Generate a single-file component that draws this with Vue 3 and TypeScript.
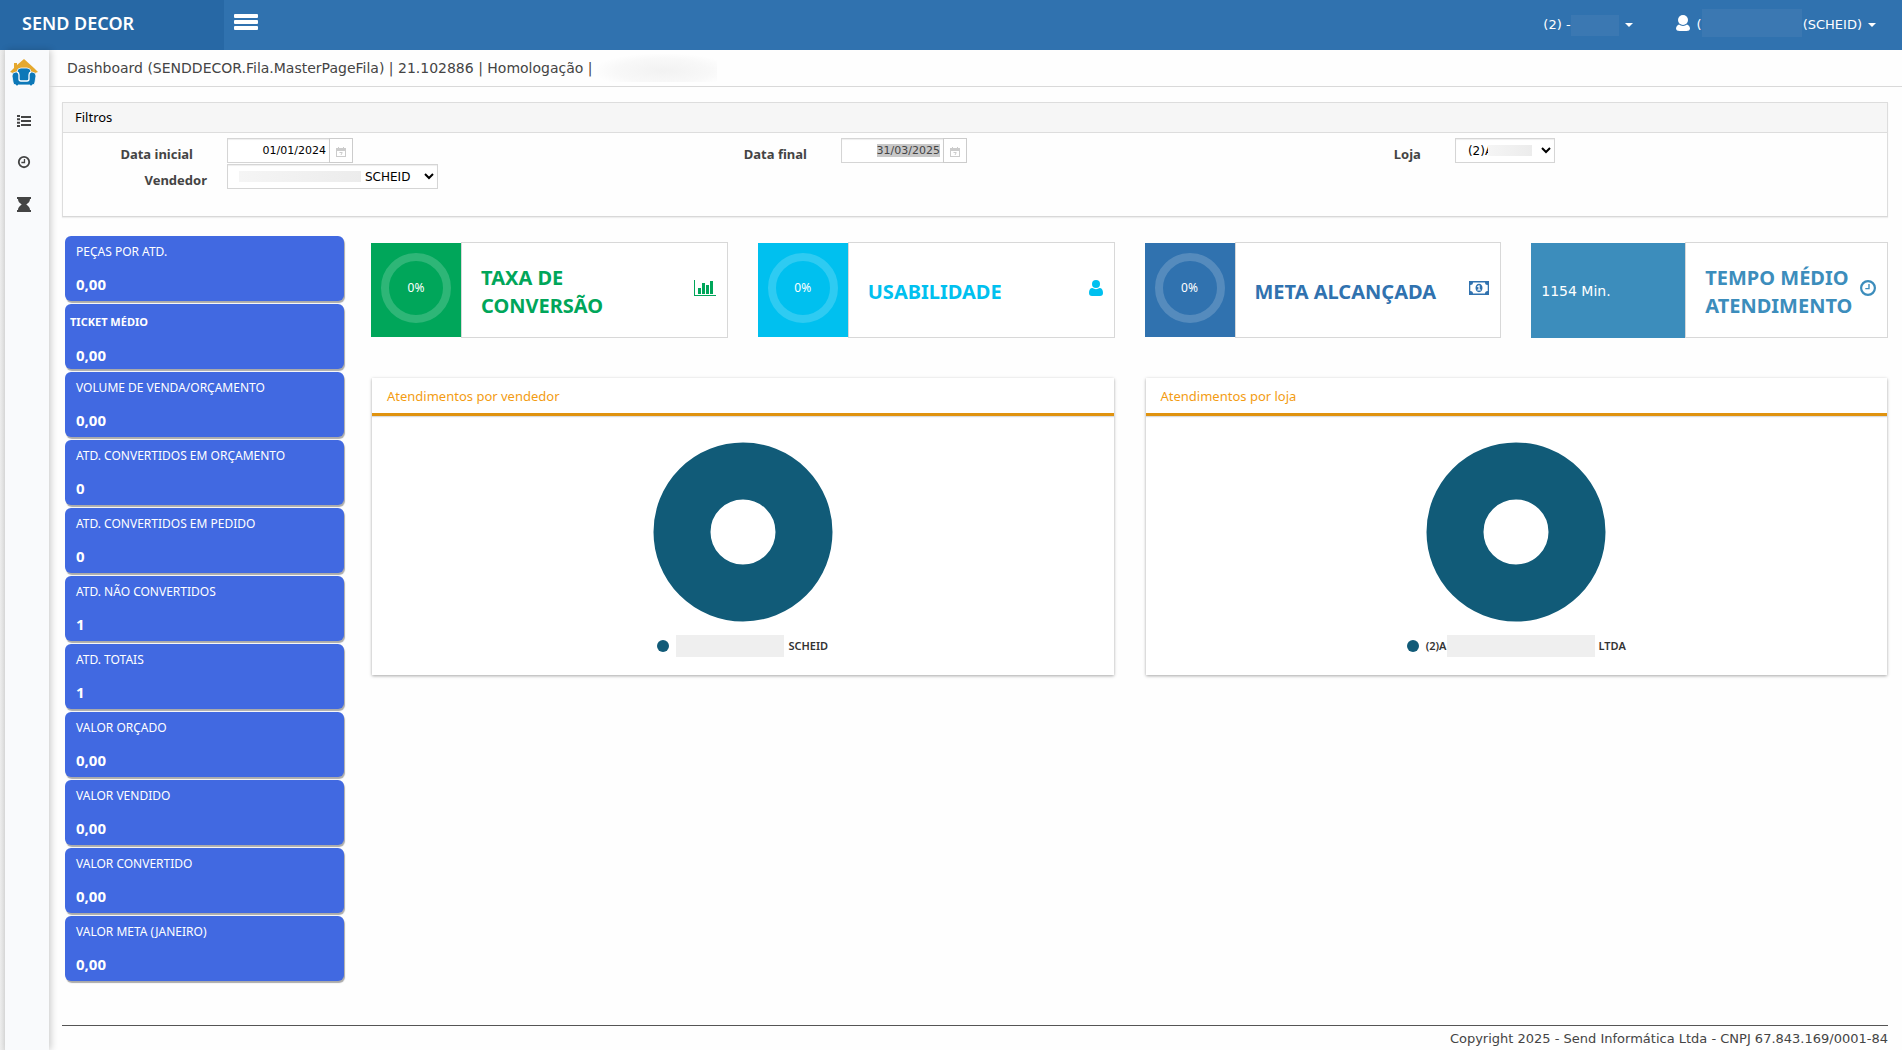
<script setup lang="ts">
import { onMounted, ref } from 'vue'

interface Metric {
  title: string
  value: string
  strong?: boolean
}

interface Kpi {
  title: string
  value: string
  color: string
  icon: 'chart' | 'user' | 'money' | 'clock'
  ring: boolean
}

const metrics: Metric[] = [
  { title: 'PEÇAS POR ATD.', value: '0,00' },
  { title: 'TICKET MÉDIO', value: '0,00', strong: true },
  { title: 'VOLUME DE VENDA/ORÇAMENTO', value: '0,00' },
  { title: 'ATD. CONVERTIDOS EM ORÇAMENTO', value: '0' },
  { title: 'ATD. CONVERTIDOS EM PEDIDO', value: '0' },
  { title: 'ATD. NÃO CONVERTIDOS', value: '1' },
  { title: 'ATD. TOTAIS', value: '1' },
  { title: 'VALOR ORÇADO', value: '0,00' },
  { title: 'VALOR VENDIDO', value: '0,00' },
  { title: 'VALOR CONVERTIDO', value: '0,00' },
  { title: 'VALOR META (JANEIRO)', value: '0,00' },
]

const kpis: Kpi[] = [
  { title: 'TAXA DE CONVERSÃO', value: '0%', color: '#00a65a', icon: 'chart', ring: true },
  { title: 'USABILIDADE', value: '0%', color: '#00c0ef', icon: 'user', ring: true },
  { title: 'META ALCANÇADA', value: '0%', color: '#3072af', icon: 'money', ring: true },
  { title: 'TEMPO MÉDIO ATENDIMENTO', value: '1154 Min.', color: '#3c8dbc', icon: 'clock', ring: false },
]

const charts = [
  { title: 'Atendimentos por vendedor', before: '', after: 'SCHEID', mask: 108 },
  { title: 'Atendimentos por loja', before: '(2)A', after: 'LTDA', mask: 148 },
]

const startDate = ref('01/01/2024')
const endDate = ref('31/03/2025')
const endInput = ref<HTMLInputElement | null>(null)

onMounted(() => {
  endInput.value?.focus()
  endInput.value?.select()
})
</script>

<template>
  <div class="app">
    <header class="topbar">
      <a class="brand" href="#">SEND DECOR</a>
      <button class="burger" type="button" aria-label="Menu"><i></i><i></i><i></i></button>
      <nav class="account">
        <a href="#" class="store">(2) -<span class="veil veil-store"></span><b class="caret"></b></a>
        <a href="#" class="user">
          <svg width="14" height="16" viewBox="0 0 14 16"><circle cx="7" cy="5" r="5" /><path d="M3 9.500C1 10.500 0 12 0 13.500 0 15.200 1.500 16 3.500 16h7c2 0 3.500-.8 3.500-2.500 0-1.500-1-3-3-4-2.200 1.900-5.800 1.900-8 0z" /></svg>
          <span class="initial">(</span><span class="veil veil-user"></span>(SCHEID)<b class="caret"></b>
        </a>
      </nav>
    </header>

    <div class="body">
      <aside class="rail">
        <a href="#" aria-label="Início">
          <svg width="28" height="28" viewBox="0 0 28 28">
            <path d="M0 13 4 9V4h3v2l7-6 10 9 4 4-3 1H3z" fill="#e5a82e" />
            <path d="M7 13q0-4 4-4h6q4 0 4 4h1q4 0 4 4l-1 6q0 3-3 3v1h-2v-1H8v1H6v-1q-3 0-3-3l-1-6q0-4 4-4z" fill="#0d78b8" stroke="#fff" stroke-width=".8" />
            <path d="M7 13q2 .5 2 3v4q0 2 2 2h6q2 0 2-2v-4q0-2.500 2-3" fill="none" stroke="#fff" stroke-width="1.300" />
          </svg>
        </a>
        <a href="#" aria-label="Lista">
          <svg width="14" height="12" viewBox="0 0 14 12"><path d="M0 0h3v2H0zM0 3.300h3v2H0zM0 6.700h3v2H0zM0 10h3v2H0zM4 1h10v2H4zM4 5h10v2H4zM4 9h10v2H4z" /></svg>
        </a>
        <a href="#" aria-label="Histórico">
          <svg width="14" height="14" viewBox="0 0 16 16"><path d="M8 1a7 7 0 1 0 0 14A7 7 0 0 0 8 1zm0 2.100a4.900 4.900 0 1 1 0 9.800 4.900 4.900 0 0 1 0-9.800zM7.800 4.500h1.500v4.800H5V7.800h2.800z" /></svg>
        </a>
        <a href="#" aria-label="Espera">
          <svg width="14" height="15" viewBox="0 0 14 15"><path d="M0 0h14v2h-1c0 2.500-1.500 4-3.700 5.500C11.500 9 13 10.500 13 13h1v2H0v-2h1c0-2.500 1.500-4 3.700-5.500C2.500 6 1 4.500 1 2H0z" /></svg>
        </a>
      </aside>

      <div class="page">
        <div class="crumbs">
          Dashboard (SENDDECOR.Fila.MasterPageFila) | 21.102886 | Homologação |
          <span class="veil veil-crumb"></span>
        </div>

        <main class="content">
          <section class="filters">
            <h2>Filtros</h2>
            <form class="fields" @submit.prevent>
              <div class="field">
                <label for="start">Data inicial</label>
                <input id="start" v-model="startDate" type="text" />
                <button type="button" aria-label="Abrir calendário">
                  <svg width="10" height="10" viewBox="0 0 10 10"><path d="M0 1h2V0h1v1h4V0h1v1h2v9H0zM1 4v5h8V4z" fill-rule="evenodd" /><path d="M3.500 5h3v1L5.500 8h-1L5.500 6h-2z" /></svg>
                </button>
              </div>
              <div class="field">
                <label for="end">Data final</label>
                <input id="end" ref="endInput" v-model="endDate" type="text" />
                <button type="button" aria-label="Abrir calendário">
                  <svg width="10" height="10" viewBox="0 0 10 10"><path d="M0 1h2V0h1v1h4V0h1v1h2v9H0zM1 4v5h8V4z" fill-rule="evenodd" /><path d="M3.500 5h3v1L5.500 8h-1L5.500 6h-2z" /></svg>
                </button>
              </div>
              <div class="field">
                <label for="store">Loja</label>
                <span class="select store-select">
                  <select id="store"><option>(2)A</option></select>
                  <span class="veil"></span>
                </span>
              </div>
              <div class="field wide-label">
                <label for="seller">Vendedor</label>
                <span class="select seller-select">
                  <select id="seller"><option>SCHEID</option></select>
                  <span class="veil"></span>
                </span>
              </div>
            </form>
          </section>

          <div class="board">
            <section class="metrics">
              <article v-for="m in metrics" :key="m.title" class="metric" :class="{ strong: m.strong }">
                <h3>{{ m.title }}</h3>
                <p>{{ m.value }}</p>
              </article>
            </section>

            <section class="panels">
              <div class="kpis">
                <article v-for="k in kpis" :key="k.title" class="kpi" :style="{ color: k.color }">
                  <div class="kpi-value" :class="{ plain: !k.ring }" :style="{ background: k.color }">
                    <span :class="{ ring: k.ring }">{{ k.value }}</span>
                  </div>
                  <div class="kpi-body">
                    <h3>{{ k.title }}</h3>
                    <svg v-if="k.icon === 'chart'" width="22" height="16" viewBox="0 0 22 16"><path d="M0 0h1v15h21v1H0zM4 8h3v6H4zM8 3h3v11H8zM12 5h3v9h-3zM16 1h3v13h-3z" /></svg>
                    <svg v-else-if="k.icon === 'user'" width="14" height="16" viewBox="0 0 14 16"><circle cx="7" cy="4" r="4" /><path d="M3.500 8C1 8 0 10 0 13c0 2 1 3 3 3h8c2 0 3-1 3-3 0-3-1-5-3.500-5-2 1.500-5 1.500-7 0z" /></svg>
                    <svg v-else-if="k.icon === 'money'" width="20" height="14" viewBox="0 0 20 14">
                      <path fill-rule="evenodd" d="M0 0h20v14H0zM4 1.500Q4 4 1.300 4v6Q4 10 4 12.500h12q0-2.500 2.700-2.500V4Q16 4 16 1.500z" />
                      <path fill-rule="evenodd" d="M10 2.800c2 0 3.500 2 3.500 4.200s-1.500 4.200-3.500 4.200S6.500 9.200 6.500 7 8 2.800 10 2.800zM9.500 4.300 8 5.600l.7.700.7-.5v2.700H8.300v1h3.500v-1h-1.100V4.300z" />
                    </svg>
                    <svg v-else width="16" height="16" viewBox="0 0 16 16"><path d="M8 0a8 8 0 1 0 0 16A8 8 0 0 0 8 0zm0 2.200a5.800 5.800 0 1 1 0 11.600A5.800 5.800 0 0 1 8 2.200zM8.300 4h1.400v5.300H5.300V8h3z" /></svg>
                  </div>
                </article>
              </div>

              <div class="charts">
                <article v-for="c in charts" :key="c.title" class="chart">
                  <h3>{{ c.title }}</h3>
                  <svg class="donut" width="180" height="180" viewBox="0 0 180 180"><circle cx="90" cy="90" r="61" fill="none" stroke="#115b78" stroke-width="57" /></svg>
                  <p class="legend">
                    <i></i>{{ c.before }}<span class="veil" :style="{ width: c.mask + 'px' }"></span>{{ c.after }}
                  </p>
                </article>
              </div>
            </section>
          </div>
        </main>

        <footer>Copyright 2025 - Send Informática Ltda - CNPJ 67.843.169/0001-84</footer>
      </div>
    </div>
  </div>
</template>

<style>
body {
  background: #fefefe;
}
</style>

<style scoped>
* {
  box-sizing: border-box;
  margin: 0;
}
a {
  color: inherit;
  text-decoration: none;
}
svg {
  display: block;
  fill: currentColor;
  flex: none;
}
.app {
  min-height: 100vh;
  display: flex;
  flex-direction: column;
  font-family: 'DejaVu Sans', sans-serif;
  color: #444;
}
.veil {
  display: block;
  flex: none;
  background: #efefef;
}

/* Top bar */
.topbar {
  height: 50px;
  display: flex;
  background: #3072af;
  color: #fff;
}
.brand {
  width: 224px;
  padding: 0 22px;
  background: #2768a5;
  font: 600 18px/46px 'Noto Sans', sans-serif;
}
.burger {
  display: flex;
  flex-direction: column;
  gap: 2px;
  padding: 14px 10px;
  border: 0;
  background: none;
}
.burger i {
  width: 24px;
  height: 4px;
  border-radius: 1px;
  background: #fff;
}
.account {
  display: flex;
  margin-left: auto;
  padding-right: 26px;
  font-size: 13px;
  line-height: 50px;
}
.account a {
  display: flex;
  align-items: center;
}
.account .veil {
  background: #3b78b2;
}
.veil-store {
  width: 48px;
  height: 21px;
}
.initial {
  margin-left: 7px;
}
.veil-user {
  width: 100px;
  height: 28px;
  margin: 0 1px 4px 0;
}
.user {
  margin-left: 43px;
}
.user svg {
  margin-bottom: 4px;
}
.caret {
  margin-left: 6px;
  border: 4px solid transparent;
  border-top-color: #fff;
  border-bottom: 0;
}

/* Side rail */
.body {
  flex: 1;
  display: flex;
  padding-left: 5px;
  background: linear-gradient(90deg, #eee, #e2e2e2 5px, #fefefe 5px);
}
.rail {
  width: 44px;
  flex: none;
  display: flex;
  flex-direction: column;
  align-items: center;
  gap: 28px;
  padding: 9px 6px 0 0;
  background: #f9fafc;
  box-shadow: 2px 0 7px rgba(0, 0, 0, 0.2);
}
.page {
  flex: 1;
  min-width: 0;
  display: flex;
  flex-direction: column;
}
.crumbs {
  height: 37px;
  display: flex;
  align-items: center;
  padding-left: 18px;
  border-bottom: 1px solid #d9d9d9;
  font-size: 14px;
}
.veil-crumb {
  width: 120px;
  height: 28px;
  margin-left: 4px;
  background: radial-gradient(ellipse at 55% 60%, #f2f2f2, #f8f8f8 50%, #fefefe 75%);
}
.content {
  flex: 1;
  padding: 15px 14px 0 13px;
}

/* Filters */
.filters {
  min-height: 115px;
  border: 1px solid #ddd;
  border-bottom-color: #d8d8d8;
  box-shadow: 0 1px 1px #eee;
}
.filters h2 {
  height: 30px;
  padding-left: 12px;
  background: #f6f6f6;
  border-bottom: 1px solid #ddd;
  color: #000;
  font: 400 13px/28px 'Noto Sans', sans-serif;
}
.fields {
  display: grid;
  grid-template-columns: 33.66% 33.66% 1fr;
  row-gap: 1px;
  padding-top: 5px;
}
.field {
  display: flex;
  height: 25px;
}
.field label {
  width: 164px;
  padding: 4px 34px 0 0;
  text-align: right;
  font: 700 13px/24px 'Noto Sans', sans-serif;
}
.wide-label label {
  padding-right: 20px;
}
.field input,
.field select {
  height: 25px;
  border: 1px solid #d5d5d5;
  box-shadow: inset 0 1px 1px #eee;
  background: #fff;
  color: #000;
  outline: 0;
}
.field input {
  width: 103px;
  padding: 0 3px;
  text-align: right;
  font: 11px 'DejaVu Sans', sans-serif;
}
.field select {
  width: 100%;
  padding-top: 1px;
  font: 12px 'DejaVu Sans', sans-serif;
}
.field input::selection {
  background: #c8c8c8;
  color: #444;
}
.field button {
  width: 24px;
  margin-left: -1px;
  padding: 2px 0 0 6px;
  border: 1px solid #ccc;
  background: #fff;
  color: #ccc;
}
.select {
  position: relative;
}
.select .veil {
  position: absolute;
  top: 7px;
  height: 11px;
  background: linear-gradient(90deg, #f5f5f5, #ececec);
}
.store-select {
  width: 100px;
}
.store-select select {
  padding-left: 8px;
}
.store-select .veil {
  left: 33px;
  width: 44px;
}
.seller-select {
  width: 211px;
}
.seller-select select {
  padding-left: 133px;
}
.seller-select .veil {
  left: 12px;
  width: 122px;
}

/* Metric cards */
.board {
  display: flex;
  gap: 27px;
  padding: 19px 0 0 3px;
}
.metrics {
  width: 279px;
  flex: none;
  display: flex;
  flex-direction: column;
  gap: 3px;
}
.metric {
  height: 65px;
  padding: 6px 11px;
  border-radius: 6px;
  background: #4169e1;
  box-shadow: 1px 2px 1px #aaa;
  color: #fff;
  font-family: 'Noto Sans', sans-serif;
}
.metric h3 {
  font-size: 12px;
  font-weight: 400;
  line-height: 20px;
}
.metric p {
  padding-top: 12px;
  font-size: 15px;
  font-weight: 700;
  line-height: 20px;
}
.metric.strong h3 {
  margin-left: -6px;
  padding-top: 2px;
  font-size: 11px;
  font-weight: 700;
}
.metric.strong p {
  padding-top: 13px;
}

/* KPI boxes */
.panels {
  flex: 1;
  min-width: 0;
  padding-top: 6px;
}
.kpis {
  display: grid;
  grid-template-columns: repeat(4, 1fr);
  gap: 30px;
}
.kpi {
  display: flex;
  height: 96px;
}
.kpi-value {
  width: 90px;
  flex: none;
  display: flex;
  align-items: center;
  justify-content: center;
  margin: 1px 0;
  color: #fff;
  font: 12px 'Noto Sans', sans-serif;
}
.kpi-value.plain {
  width: 154px;
  margin-bottom: 0;
  justify-content: flex-start;
  padding-left: 10px;
  font: 14px 'DejaVu Sans', sans-serif;
}
.ring {
  width: 70px;
  margin-bottom: 4px;
  border: 8px solid rgba(255, 255, 255, 0.18);
  border-radius: 50%;
  text-align: center;
  line-height: 54px;
}
.kpi-body {
  flex: 1;
  display: flex;
  align-items: center;
  justify-content: space-between;
  padding: 0 11px 0 19px;
  border: 1px solid #d8d8d8;
  background: #fff;
}
.kpi-body h3 {
  max-width: 190px;
  padding-top: 3px;
  font: 700 20px/28px 'Noto Sans', sans-serif;
}
.kpi-body svg {
  margin-bottom: 4px;
}

/* Charts */
.charts {
  display: grid;
  grid-template-columns: 1fr 1fr;
  gap: 32px;
  padding: 40px 1px 0;
}
.chart {
  display: flex;
  flex-direction: column;
  align-items: center;
  height: 297px;
  background: #fff;
  box-shadow: 0 1px 3px rgba(0, 0, 0, 0.35);
}
.chart h3 {
  align-self: stretch;
  height: 38px;
  padding-left: 15px;
  border-bottom: 3px solid #e0930f;
  box-shadow: 0 1px 1px #ddd;
  color: #f39c12;
  font: 400 13px/36px 'Noto Sans', sans-serif;
}
.donut {
  margin-top: 26px;
}
.legend {
  display: flex;
  align-items: center;
  height: 23px;
  margin-top: 12px;
  color: #333;
  font: 600 11px 'Noto Sans', sans-serif;
}
.legend i {
  width: 12px;
  height: 12px;
  margin-right: 7px;
  border-radius: 50%;
  background: #115b78;
}
.legend .veil {
  height: 22px;
  margin-right: 4px;
}

footer {
  height: 25px;
  margin: 0 14px 0 13px;
  border-top: 1px solid #555;
  text-align: right;
  font-size: 13px;
  line-height: 25px;
}
</style>
